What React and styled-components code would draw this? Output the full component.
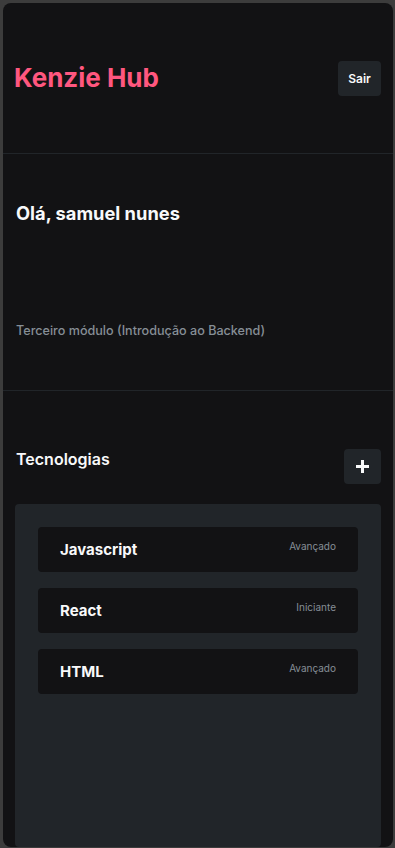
import React from "react";
import styled, { createGlobalStyle } from "styled-components";

const Global = createGlobalStyle`
  * { box-sizing: border-box; }
  html, body { margin: 0; padding: 0; background: #3c3c3c; }
  body { font-family: Inter, "Noto Sans", sans-serif; -webkit-font-smoothing: antialiased; }
`;

const Frame = styled.div`
  padding: 3px 2px 1px 3px;
  height: 848px;
`;

const Panel = styled.main`
  height: 844px;
  background: #121214;
  border-radius: 8px;
  overflow: hidden;
  display: flex;
  flex-direction: column;
`;

const Header = styled.header`
  height: 151px;
  flex-shrink: 0;
  display: flex;
  align-items: center;
  justify-content: space-between;
  padding: 0 12px 0 11px;
  border-bottom: 1px solid #212529;
`;

const Logo = styled.h1`
  margin: 0;
  color: #ff577f;
  font-size: 26px;
  font-weight: 700;
  line-height: 32px;
`;

const GreyButton = styled.button`
  border: none;
  background: #212529;
  color: #f8f9fa;
  border-radius: 4px;
  font-family: inherit;
  font-weight: 600;
  font-size: 12px;
  display: flex;
  align-items: center;
  justify-content: center;
  padding: 0;
  width: ${(p) => p.$w}px;
  height: ${(p) => p.$h}px;
  flex-shrink: 0;
`;

const Profile = styled.section`
  height: 237px;
  flex-shrink: 0;
  display: flex;
  flex-direction: column;
  padding: 47px 13px 0 13px;
  border-bottom: 1px solid #212529;
`;

const Greeting = styled.h2`
  margin: 0;
  color: #f8f9fa;
  font-size: 18.3px;
  font-weight: 700;
  line-height: 24px;
`;

const Module = styled.p`
  margin: 98px 0 0;
  color: #868e96;
  font-size: 12.6px;
  font-weight: 500;
  line-height: 16px;
`;

const Techs = styled.section`
  flex: 1;
  display: flex;
  flex-direction: column;
  padding: 58px 12px 0 12px;
  min-height: 0;
`;

const TechsHead = styled.div`
  display: flex;
  justify-content: space-between;
  align-items: flex-start;
`;

const TechsTitle = styled.h3`
  margin: 0;
  color: #f8f9fa;
  font-size: 16px;
  font-weight: 600;
  line-height: 20px;
  padding-left: 1px;
`;

const List = styled.ul`
  list-style: none;
  margin: 20px 0 0;
  padding: 23px;
  flex: 1;
  background: #212529;
  border-radius: 4px;
  display: flex;
  flex-direction: column;
  gap: 16px;
`;

const Card = styled.li`
  height: 45px;
  background: #121214;
  border-radius: 4px;
  display: flex;
  justify-content: space-between;
  align-items: flex-start;
  padding: 12px 22px;
`;

const TechName = styled.span`
  color: #f8f9fa;
  font-size: 15px;
  font-weight: 700;
  line-height: 21px;
`;

const Level = styled.span`
  color: #868e96;
  font-size: 10px;
  font-weight: 400;
  line-height: 14px;
`;

const techs = [
  { name: "Javascript", level: "Avançado" },
  { name: "React", level: "Iniciante" },
  { name: "HTML", level: "Avançado" },
];

const PlusIcon = () => (
  <svg width="13" height="13" viewBox="0 0 13 13" aria-hidden="true">
    <rect x="5" y="0" width="3" height="13" fill="#f8f9fa" />
    <rect x="0" y="5" width="13" height="3" fill="#f8f9fa" />
  </svg>
);

export default function App() {
  return (
    <>
      <Global />
      <Frame>
        <Panel>
          <Header>
            <Logo>Kenzie Hub</Logo>
            <GreyButton $w={43} $h={35}>Sair</GreyButton>
          </Header>
          <Profile>
            <Greeting>Olá, samuel nunes</Greeting>
            <Module>Terceiro módulo (Introdução ao Backend)</Module>
          </Profile>
          <Techs>
            <TechsHead>
              <TechsTitle>Tecnologias</TechsTitle>
              <GreyButton $w={37} $h={35}>
                <PlusIcon />
              </GreyButton>
            </TechsHead>
            <List>
              {techs.map((t) => (
                <Card key={t.name}>
                  <TechName>{t.name}</TechName>
                  <Level>{t.level}</Level>
                </Card>
              ))}
            </List>
          </Techs>
        </Panel>
      </Frame>
    </>
  );
}
